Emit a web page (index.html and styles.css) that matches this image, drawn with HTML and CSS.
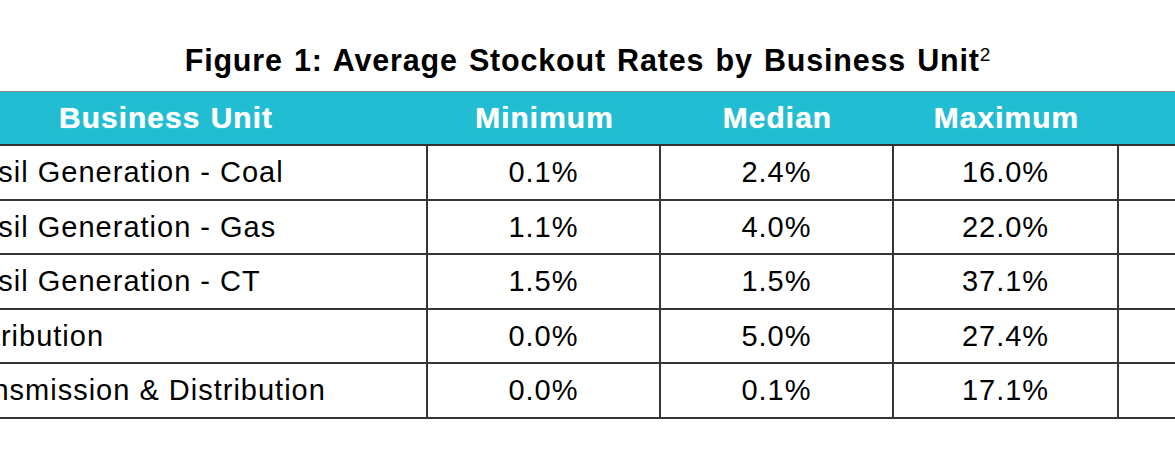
FILE: index.html
```html
<!DOCTYPE html>
<html lang="en">
<head>
<meta charset="utf-8">
<title>Figure 1: Average Stockout Rates by Business Unit</title>
<link rel="stylesheet" href="styles.css">
</head>
<body>
<div class="page">
  <h1 class="title">Figure 1: Average Stockout Rates by Business Unit<sup class="note">2</sup></h1>
  <table class="stock">
    <colgroup>
      <col class="c-unit">
      <col class="c-num">
      <col class="c-num">
      <col class="c-max">
      <col class="c-extra">
    </colgroup>
    <thead>
      <tr><th>Business Unit</th><th>Minimum</th><th>Median</th><th>Maximum</th><th></th></tr>
    </thead>
    <tbody>
      <tr><td class="unit">Fossil Generation - Coal</td><td>0.1%</td><td>2.4%</td><td>16.0%</td><td></td></tr>
      <tr><td class="unit">Fossil Generation - Gas</td><td>1.1%</td><td>4.0%</td><td>22.0%</td><td></td></tr>
      <tr><td class="unit">Fossil Generation - CT</td><td>1.5%</td><td>1.5%</td><td>37.1%</td><td></td></tr>
      <tr><td class="unit">Distribution</td><td>0.0%</td><td>5.0%</td><td>27.4%</td><td></td></tr>
      <tr><td class="unit">Transmission &amp; Distribution</td><td>0.0%</td><td>0.1%</td><td>17.1%</td><td></td></tr>
    </tbody>
  </table>
</div>
</body>
</html>
```
FILE: styles.css
```css
html, body {
  margin: 0;
  background: #ffffff;
}

.page {
  width: 1175px;
  height: 460px;
  overflow: hidden;
  font-family: "Liberation Sans", Arial, sans-serif;
  color: #000000;
}

.title {
  margin: 0;
  padding-top: 43px;
  height: 34px;
  line-height: 34px;
  font-size: 30.5px;
  font-weight: 700;
  text-align: center;
  letter-spacing: 0.8px;
  word-spacing: 2px;
}

.note {
  font-size: 19px;
  font-weight: 400;
  line-height: 0;
  letter-spacing: 0;
  vertical-align: 10px;
}

.stock {
  margin-top: 14px;
  margin-left: -96px;
  width: 1415px;
  table-layout: fixed;
  border-collapse: separate;
  border-spacing: 0;
}

.c-unit { width: 524px; }
.c-num { width: 233px; }
.c-max { width: 225px; }
.c-extra { width: 200px; }

.stock th {
  height: 52px;
  padding: 0;
  background: #21bdd3;
  color: #ffffff;
  font-size: 30px;
  font-weight: 700;
  letter-spacing: 1px;
  word-spacing: 1px;
  text-align: center;
  vertical-align: middle;
  border-top: 1px solid #8c8c8c;
  border-bottom: 2px solid #333333;
  text-shadow: 0 0 1px rgba(255, 255, 255, 0.8);
}

.stock td {
  height: 53px;
  padding: 0;
  font-size: 29px;
  letter-spacing: 1px;
  text-align: center;
  vertical-align: middle;
  border-right: 2px solid #363636;
  border-bottom: 2px solid #363636;
}

.stock tbody tr:nth-child(even) td {
  height: 52px;
}

.stock td.unit {
  text-align: left;
  padding-left: 43px;
}
```
